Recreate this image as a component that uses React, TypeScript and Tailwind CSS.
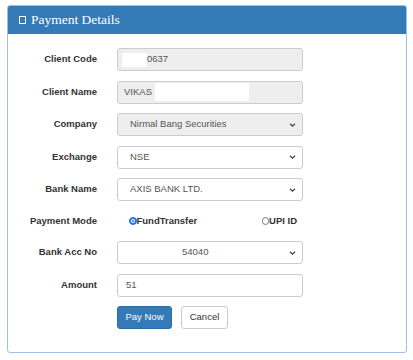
import React from "react";

const Chevron = () => (
  <svg width="7" height="5" viewBox="0 0 7 5" className="absolute right-[6px] top-1/2 -translate-y-1/2">
    <path d="M1 1.2 L3.5 3.6 L6 1.2" fill="none" stroke="#444" strokeWidth="1.2" />
  </svg>
);

const Label = ({ children }: { children: React.ReactNode }) => (
  <div className="w-[89px] shrink-0 text-right font-bold text-[9.5px] text-[#333]">{children}</div>
);

const Row = ({ label, children, h = "h-[23px]" }: { label: string; children: React.ReactNode; h?: string }) => (
  <div className={`flex items-center ${h} mb-[9.5px]`}>
    <Label>{label}</Label>
    <div className="ml-[20px] w-[186px] h-full relative">{children}</div>
  </div>
);

const boxBase = "w-full h-full border border-[#ccc] rounded-[3px] flex items-center text-[9.5px] text-[#555] relative";

export default function App() {
  return (
    <div className="w-[413px] h-[360px] bg-white pt-[5px] pl-[7px]" style={{ fontFamily: '"Liberation Sans", Arial, sans-serif' }}>
      <div className="w-[400px] h-[348px] border border-[#9ec1e4] rounded-[3px] overflow-hidden">
        <div className="h-[29px] bg-[#337ab7] -mt-px -mx-px border border-[#337ab7] flex items-center pl-[11px] rounded-t-[3px]">
          <span className="inline-block w-[7px] h-[8px] border border-white mr-[5px] mt-[1px]"></span>
          <span className="text-white text-[13.5px] leading-none" style={{ fontFamily: '"Liberation Serif", "Times New Roman", serif' }}>
            Payment Details
          </span>
        </div>
        <div className="pt-[14px]">
          <Row label="Client Code">
            <div className={`${boxBase} bg-[#eee] pl-[4px]`}>
              <span className="inline-block w-[25px] h-[14px] bg-white"></span>
              <span>0637</span>
            </div>
          </Row>
          <Row label="Client Name">
            <div className={`${boxBase} bg-[#eee] pl-[6px]`}>
              <span>VIKAS</span>
              <span className="inline-block w-[94px] h-[18px] bg-white ml-[3px]"></span>
            </div>
          </Row>
          <Row label="Company">
            <div className={`${boxBase} bg-[#eee] pl-[12px]`}>
              <span>Nirmal Bang Securities</span>
              <Chevron />
            </div>
          </Row>
          <Row label="Exchange">
            <div className={`${boxBase} bg-white pl-[12px]`}>
              <span>NSE</span>
              <Chevron />
            </div>
          </Row>
          <Row label="Bank Name">
            <div className={`${boxBase} bg-white pl-[12px]`}>
              <span>AXIS BANK LTD.</span>
              <Chevron />
            </div>
          </Row>
          <Row label="Payment Mode" h="h-[21px]">
            <div className="w-full h-full flex items-center justify-between pl-[12px] pr-[6px] text-[9.5px] font-bold text-[#333]">
              <div className="flex items-center">
                <span className="inline-block w-[7.5px] h-[7.5px] rounded-full bg-[#1a73e8] border border-[#1a73e8] relative">
                  <span className="absolute inset-[1.5px] rounded-full bg-[#1a73e8] ring-1 ring-white"></span>
                </span>
                <span>FundTransfer</span>
              </div>
              <div className="flex items-center">
                <span className="inline-block w-[7.5px] h-[7.5px] rounded-full border border-[#777] bg-white"></span>
                <span>UPI ID</span>
              </div>
            </div>
          </Row>
          <Row label="Bank Acc No">
            <div className={`${boxBase} bg-white pl-[64px]`}>
              <span>54040</span>
              <Chevron />
            </div>
          </Row>
          <Row label="Amount">
            <div className={`${boxBase} bg-white pl-[8px]`}>
              <span>51</span>
            </div>
          </Row>
          <div className="flex items-center h-[23px]">
            <div className="w-[89px] shrink-0"></div>
            <div className="ml-[20px] flex gap-[9px] h-full">
              <button className="h-full w-[55px] bg-[#337ab7] border border-[#2e6da4] rounded-[3px] text-white text-[9.5px]">Pay Now</button>
              <button className="h-full w-[47px] bg-white border border-[#ccc] rounded-[3px] text-[#333] text-[9.5px]">Cancel</button>
            </div>
          </div>
        </div>
      </div>
    </div>
  );
}
